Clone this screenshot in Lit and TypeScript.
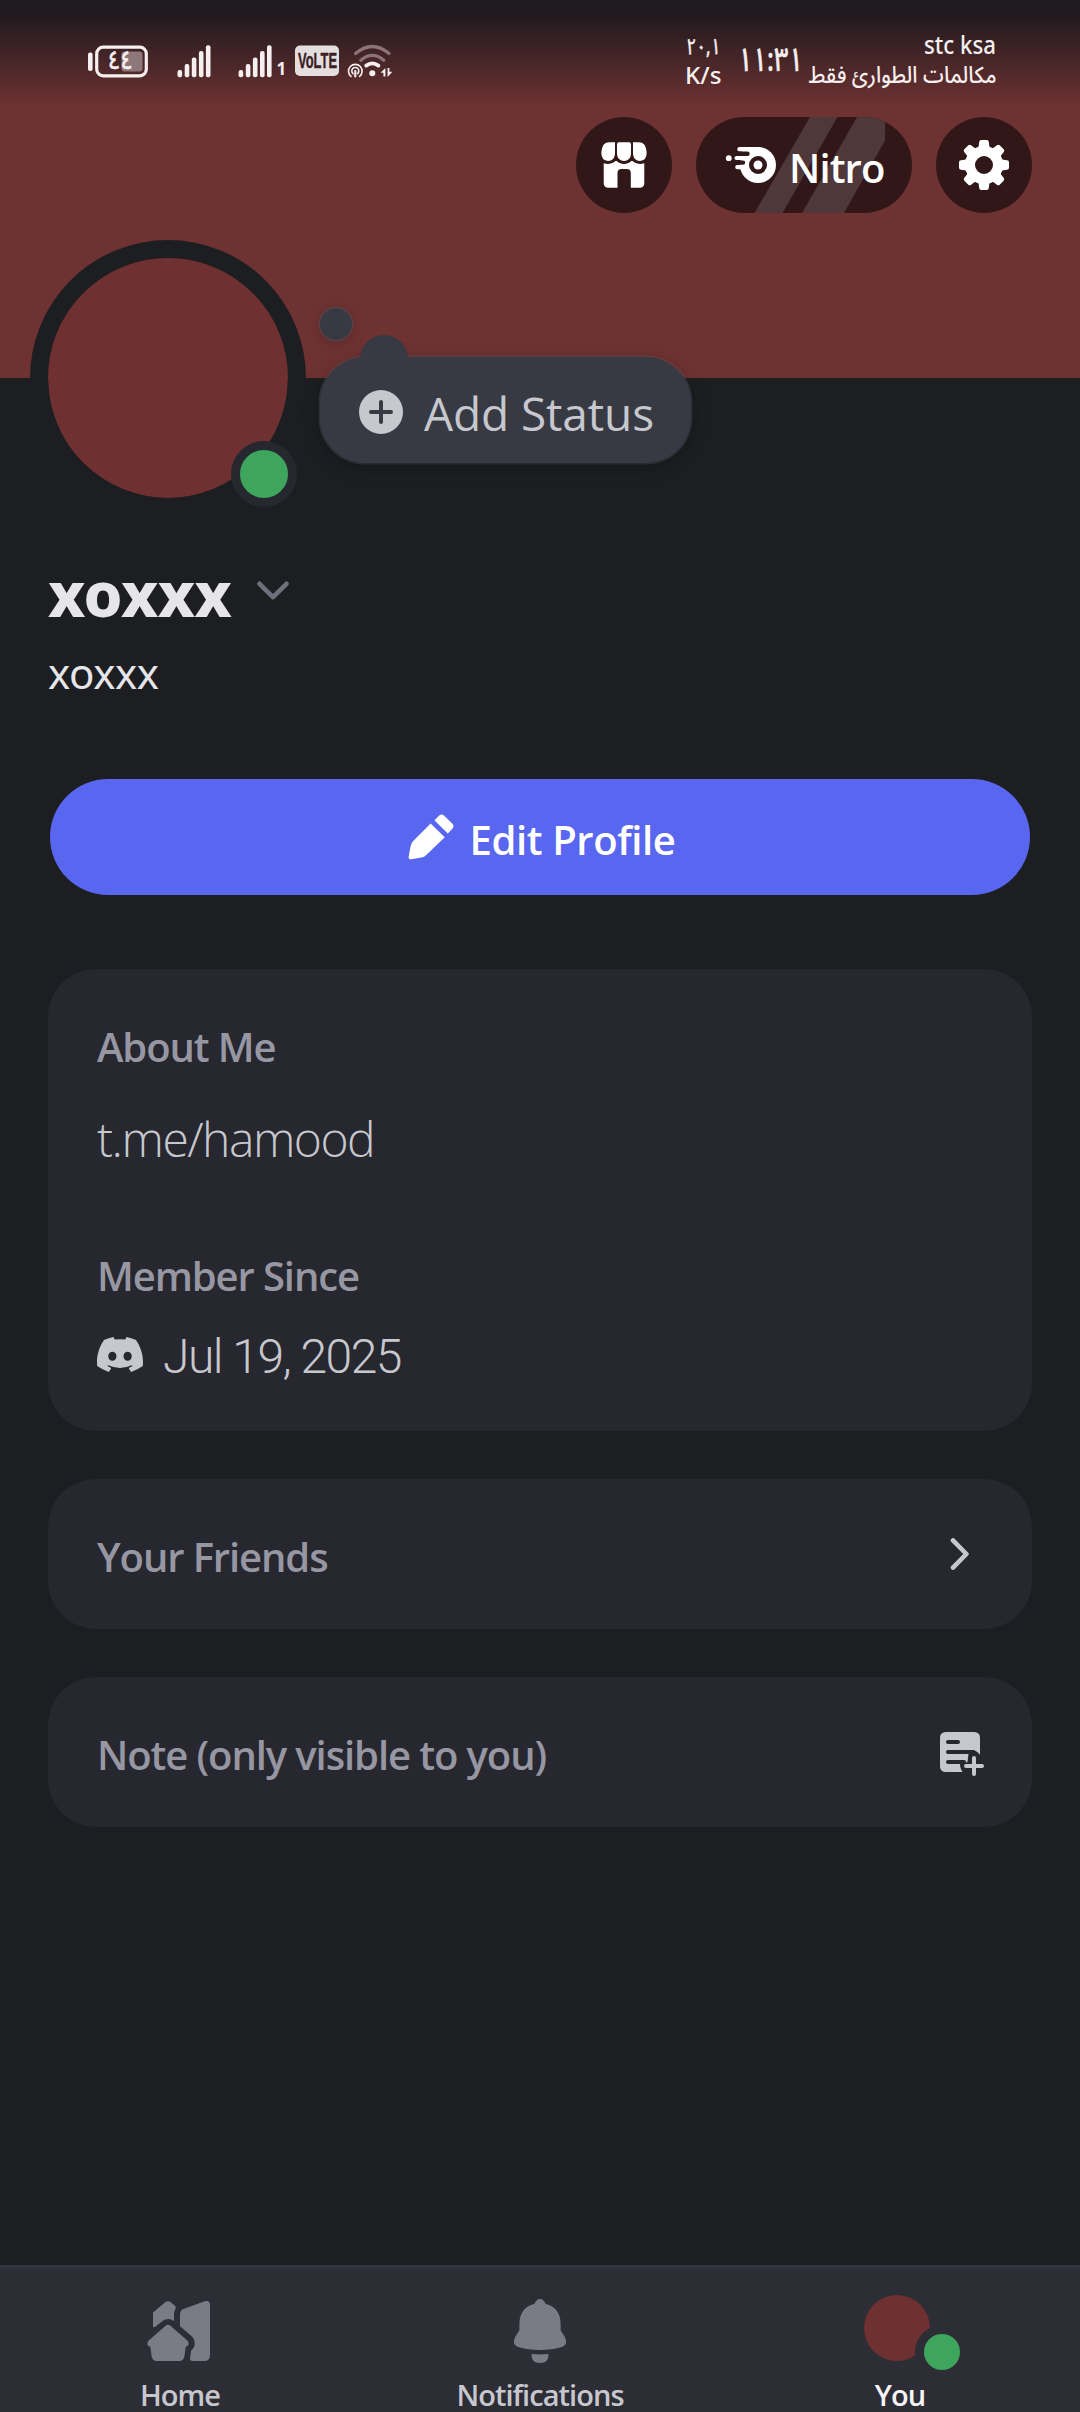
import { LitElement, html, svg, css } from 'lit';
import { customElement, property } from 'lit/decorators.js';

const shopIcon = svg`<svg width="96" height="96" viewBox="0 0 96 96" fill="#fff">
  <path d="M33 25.3H39V37Q38.3 44 32 44Q25.5 43.6 25.3 36Q26 29 28.3 27Q30 25.3 33 25.3Z"/>
  <path d="M43 25.3H53Q55 25.3 55 27.3V37a7 7 0 0 1-14 0V27.3Q41 25.3 43 25.3Z"/>
  <path d="M63 25.3H57V37Q57.7 44 64 44Q70.5 43.6 70.7 36Q70 29 67.7 27Q66 25.3 63 25.3Z"/>
  <path d="M27.7 46.3Q35 48.5 40 43.8Q44 47.2 48 47.2Q52 47.2 56 43.8Q61 48.5 68.3 46.3V66Q68.3 70.7 63.6 70.7H54.8V56Q54.8 52 50.8 52H45.5Q41.5 52 41.5 56V70.7H32.4Q27.7 70.7 27.7 66Z"/>
</svg>`;

const gearIcon = svg`<svg width="96" height="96" viewBox="0 0 96 96" fill="#fff">
  <circle cx="48" cy="48" r="14" fill="none" stroke="#fff" stroke-width="10"/>
  ${[0, 45, 90, 135, 180, 225, 270, 315].map(
    (a) => svg`<path transform="rotate(${a} 48 48)" d="M43.2 25Q43.4 23 45.2 23H50.8Q52.6 23 52.8 25L53.2 28.6L54.5 32H41.5L42.8 28.6Z"/>`
  )}
</svg>`;

const nitroIcon = svg`<svg class="nitro-icon" width="93" height="96" viewBox="0 0 93 96">
  <circle cx="62" cy="48" r="18" fill="#fff"/>
  <path d="M43.5 32.2H62M45 50.2H52" stroke="#fff" stroke-width="4.4" stroke-linecap="round"/>
  <path d="M46 32H62V40H46Z" fill="#fff"/>
  <path d="M40 36.7H51.5M38 45.6H47" stroke="#311718" stroke-width="4.4" stroke-linecap="round"/>
  <path d="M40.5 41H55M41.3 50.2H50" stroke="#fff" stroke-width="4.2" stroke-linecap="round"/>
  <circle cx="32.8" cy="41.2" r="2.9" fill="#fff"/>
  <circle cx="62" cy="48" r="9" fill="#311718"/>
  <circle cx="62" cy="48" r="4.5" fill="#fff"/>
</svg>`;

const nitroStripes = svg`<svg class="stripes" width="216" height="96" viewBox="0 0 216 96" fill="#4f3839">
  <path d="M114 0H141.5L86.5 96H58.5Z"/><path d="M161 0H189V23.5L148 96H106Z"/>
</svg>`;

const plusIcon = svg`<svg width="44" height="44" viewBox="0 0 44 44">
  <circle cx="22" cy="22" r="22" fill="#c7c7ce"/>
  <path d="M12 22H32M22 12V32" stroke="#383a43" stroke-width="4" stroke-linecap="round"/>
</svg>`;

const pencilIcon = svg`<svg width="46" height="46" viewBox="0 0 46 46" fill="#fff">
  <path d="M22.6 9.4L36.8 23.2L18.3 41Q16.3 43 13.4 43.5L3.2 45.3Q.2 45.5 .7 42.5L2.5 32.4Q3 29.3 5.2 27Z"/>
  <path d="M26.4 6.2L31 1.7Q33.6-.7 36.2 1.7L44.2 9.6Q46.8 12.2 44.2 14.9L39.8 19.5Z"/>
</svg>`;

const discordIcon = svg`<svg width="46" height="35" viewBox="0 0 127.14 96.36" fill="#c7c7ce">
  <path d="M107.7,8.07A105.15,105.15,0,0,0,81.47,0a72.06,72.06,0,0,0-3.36,6.83A97.68,97.68,0,0,0,49,6.83,72.37,72.37,0,0,0,45.64,0,105.89,105.89,0,0,0,19.39,8.09C2.79,32.65-1.71,56.6.54,80.21h0A105.73,105.73,0,0,0,32.71,96.36,77.7,77.7,0,0,0,39.6,85.25a68.42,68.42,0,0,1-10.85-5.18c.91-.66,1.8-1.34,2.66-2a75.57,75.57,0,0,0,64.32,0c.87.71,1.76,1.39,2.66,2a68.68,68.68,0,0,1-10.87,5.19,77,77,0,0,0,6.89,11.1A105.25,105.25,0,0,0,126.6,80.22h0C129.24,52.84,122.09,29.11,107.7,8.07ZM42.45,65.69C36.18,65.69,31,60,31,53s5-12.74,11.43-12.74S54,46,53.89,53,48.84,65.69,42.45,65.69Zm42.24,0C78.41,65.69,73.25,60,73.25,53s5-12.74,11.44-12.74S96.23,46,96.12,53,91.08,65.69,84.69,65.69Z"/>
</svg>`;

const chevronDown = svg`<svg class="chev" width="32" height="20" viewBox="0 0 32 20" fill="none">
  <path d="M2.5 2.8L16 16.2L29.5 2.8" stroke="#6e707b" stroke-width="4.6" stroke-linecap="round" stroke-linejoin="round"/>
</svg>`;

const chevronRight = svg`<svg class="right" width="20" height="32" viewBox="0 0 20 32" fill="none">
  <path d="M3 2.4L16.4 16L3 29.6" stroke="#c7c7ce" stroke-width="4.6" stroke-linecap="round" stroke-linejoin="round"/>
</svg>`;

const noteIcon = svg`<svg class="note" width="44" height="44" viewBox="0 0 44 44" fill="none">
  <rect width="40" height="40" rx="5.5" fill="#c7c7ce"/>
  <path d="M33 18Q38 19 41 24.5V42H24.5Q20 38 20 32L27.5 30L28.5 22Z" fill="#27272f"/>
  <path d="M8 10H18M8 20H33M8 30H24" stroke="#27272f" stroke-width="4" stroke-linecap="round"/>
  <path d="M34 26V42M26 34H42" stroke="#c7c7ce" stroke-width="4" stroke-linecap="round"/>
</svg>`;

const homeIcon = svg`<svg width="96" height="72" viewBox="0 0 96 72" fill="#7a7c85">
  <path d="M33.6 30.8Q36 28.6 38.4 30.8L55.8 46Q58.2 50.6 53.7 51.7L52.5 61Q51.5 66 47.5 66H24.5Q20.5 66 19.6 61L18.3 51.7Q13.8 50.6 16.2 46Z"/>
  <path d="M33.2 7.3Q36 5 38.8 7.3L43.2 11Q44.4 12.2 43.5 13.7Q42 16 42 19V26Q36 22.2 30.5 26L23.5 31.6Q21 33 21 31V17.5Z"/>
  <path d="M48 19.5Q48 15.3 51.5 13.9L72.8 6.2Q78 5 78 10V60Q78 66 72 66H60.5Q57.8 66 58 63.5L59.2 55.5Q63 52 62.8 48Q62.5 43.5 60 41.5L48 31.2Z"/>
</svg>`;

const bellIcon = svg`<svg width="96" height="72" viewBox="0 0 96 72" fill="#7a7c85">
  <path d="M48 4Q51.4 4 53.6 8.8Q68.6 13 68.6 29V35.3L72.8 42Q76.5 49.5 70.5 51.8Q60 55 48 55Q36 55 25.5 51.8Q19.5 49.5 23.2 42L27.4 35.3V29Q27.4 13 42.4 8.8Q44.6 4 48 4Z"/>
  <path d="M39.5 59Q48 59.8 56.5 59Q57 68 48 68Q39 68 39.5 59Z"/>
</svg>`;

const youIcon = svg`<svg class="you" width="96" height="72" viewBox="0 0 96 72">
  <circle cx="45" cy="33" r="33" fill="#6f3031"/>
  <circle cx="90" cy="57" r="27" fill="#2d2d36"/>
  <circle cx="90" cy="57" r="18" fill="#3ea55d"/>
</svg>`;

@customElement('status-bar')
class StatusBar extends LitElement {
  static styles = css`
    :host { display: flex; justify-content: space-between; height: 108px; box-sizing: border-box; padding: 28px 80px 0 86px;
      background: linear-gradient(#1b1b20, #241b1f 18px, rgba(111, 50, 50, 0) 108px); }
    svg { display: block; overflow: visible; }
    text { fill: #f6efef; font-family: "Noto Sans", "Noto Sans Arabic", sans-serif; }
    .volte { font-family: "Liberation Sans", sans-serif; font-weight: 700; fill: #382024; stroke: #382024; stroke-width: 0.4px; }
  `;
  private bars(x: number) {
    return [[0, 42], [7.2, 36], [14.3, 29.4], [21.4, 23], [28.4, 17.2]].map(
      ([dx, y]) => svg`<rect x="${x + dx}" y="${y}" width="4.6" height="${49.2 - y}" rx="2" fill="#f6efef"/>`
    );
  }
  render() {
    return html`
      <svg width="310" height="70" viewBox="0 0 310 70">
        <rect x="2" y="24.5" width="4.6" height="18.5" rx="2" fill="#f6efef"/>
        <rect x="10.7" y="19.2" width="49.6" height="28.6" rx="6.5" fill="none" stroke="#f6efef" stroke-width="3.2"/>
        <rect x="35.5" y="23.5" width="21" height="20" rx="3" fill="#8e777a"/>
        <text x="22" y="41" font-size="26" font-weight="500" textLength="25" lengthAdjust="spacingAndGlyphs" stroke="#f6efef" stroke-width="0.4">٤٤</text>
        ${this.bars(91.5)} ${this.bars(152.6)}
        <text x="190.5" y="47" font-size="17" font-weight="700">1</text>
        <rect x="209" y="17.5" width="44" height="30.5" rx="5" fill="#e4dede"/>
        <text class="volte" x="212" y="40" font-size="21.5" textLength="39" lengthAdjust="spacingAndGlyphs">VoLTE</text>
        <g transform="translate(260 16)" fill="none" stroke-linecap="round">
          <path d="M9.6 9.5Q26.3-4.5 43 9.5" stroke="#8d7376" stroke-width="3.2"/>
          <path d="M14.8 16.2Q26.3 6.4 37.8 16.2" stroke="#8d7376" stroke-width="3.2"/>
          <path d="M20.2 21.6Q26.3 17.2 32.4 21.6" stroke="#f6efef" stroke-width="3.8"/>
          <circle cx="26.3" cy="29.3" r="3" fill="#f6efef"/>
          <path d="M5 32.4A6.8 6.8 0 1 1 13.6 32.4M7 29.6A3.5 3.5 0 1 1 11.6 29.6" stroke="#f6efef" stroke-width="1.6"/>
          <path d="M9.3 27V32.5" stroke="#f6efef" stroke-width="2.2"/>
          <path d="M34.5 28.8L39.4 24V32.6H37.4V28.8ZM41.6 24H43.4V27.8H46.4L41.6 33Z" fill="#f6efef"/>
        </g>
      </svg>
      <svg width="314" height="70" viewBox="0 0 314 70">
        <text x="0.5" y="25.8" font-size="22" textLength="34" lengthAdjust="spacingAndGlyphs" stroke="#f6efef" stroke-width="0.6">٢٠,١</text>
        <text x="-1" y="56" font-size="24" font-weight="500" textLength="36.5" lengthAdjust="spacingAndGlyphs">K/s</text>
        <text x="52" y="42.8" font-size="33" font-weight="500" textLength="65" lengthAdjust="spacingAndGlyphs" stroke="#f6efef" stroke-width="0.4">١١:٣١</text>
        <text x="238" y="25.6" font-size="25" font-weight="500" textLength="72" lengthAdjust="spacingAndGlyphs">stc ksa</text>
        <text x="122.5" y="55" font-size="23" font-weight="500" textLength="188" lengthAdjust="spacingAndGlyphs">مكالمات الطوارئ فقط</text>
      </svg>`;
  }
}

@customElement('nav-item')
class NavItem extends LitElement {
  @property() label = '';
  @property({ attribute: false }) icon: unknown;
  @property({ type: Boolean, reflect: true }) active = false;
  static styles = css`
    :host { display: flex; flex-direction: column; align-items: center; width: 360px; padding-top: 28px;
      color: #c7c7ce; font: 600 29px/30px "Open Sans", sans-serif; letter-spacing: -0.95px; }
    :host([active]) { color: #f4f4f6; }
    svg { display: block; overflow: visible; }
    .label { margin-top: 13px; }
  `;
  render() {
    return html`${this.icon}<span class="label">${this.label}</span>`;
  }
}

@customElement('app-root')
class AppRoot extends LitElement {
  static styles = css`
    :host { display: flex; flex-direction: column; width: 1080px; height: 2412px; overflow: hidden; background: #1d1e22;
      font-family: "Open Sans", "Noto Sans", sans-serif; }
    svg { display: block; flex: none; }
    .banner { height: 378px; flex: none; background: #6f3232; }
    .actions { display: flex; justify-content: flex-end; gap: 24px; padding: 9px 48px 0 0; }
    .action { display: flex; width: 96px; height: 96px; border-radius: 48px; background: #311718; overflow: hidden; }
    .nitro { position: relative; width: 216px; color: #fff; }
    .stripes { position: absolute; inset: 0; }
    .nitro-icon { position: relative; }
    .nitro-label { position: relative; padding-top: 26px; font-size: 40px; font-weight: 600; line-height: 50px; letter-spacing: -0.9px; }
    .profile { display: flex; flex: none; height: 276px; margin: -138px 0 0 30px; }
    .avatar { position: relative; width: 240px; height: 240px; border: 18px solid #1d1e22; border-radius: 50%; background: #6f3031; background-clip: padding-box; }
    .online { position: absolute; left: 183px; top: 183px; width: 48px; height: 48px; border: 9px solid #27272f; border-radius: 50%; background: #3ea55d; }
    .status { position: relative; display: flex; box-sizing: border-box; width: 371px; height: 106px; margin: 117px 0 0 14px; padding: 33px 0 0 39px; gap: 21px;
      border-radius: 45px; background: #383a43; box-shadow: 0 0 0 1.5px rgba(90, 92, 104, .3), 0 4px 18px rgba(0, 0, 0, .28); }
    .nub { position: absolute; left: 40px; top: -22px; width: 48px; height: 48px; border-radius: 50%; background: #383a43; }
    .bead { position: absolute; left: 0; top: -49px; width: 32px; height: 32px; border-radius: 50%; background: #383a43;
      box-shadow: 0 0 0 1.5px rgba(90, 92, 104, .4), 0 2px 14px rgba(0, 0, 0, .25); }
    .status svg { position: relative; }
    .status-label { padding-top: 1px; color: #c7c7ce; font-size: 46px; line-height: 44px; letter-spacing: -0.1px; }
    .name { display: flex; flex: none; height: 80px; margin: 37px 0 0 48px; color: #e5e5ea; font: 800 62px/80px "Noto Sans", sans-serif; letter-spacing: -0.5px; }
    .chev { margin: 28px 0 0 26px; }
    .handle { flex: none; margin: 15px 0 -1px 48px; color: #e5e5ea; font: 400 42px/50px "Noto Sans", sans-serif; letter-spacing: -0.4px; }
    .edit { display: flex; flex: none; align-items: center; justify-content: center; gap: 16px; height: 116px; margin: 82px 50px 0 50px; padding-left: 3px; box-sizing: border-box; border-radius: 58px; background: #5866f0;
      color: #fff; font-size: 40px; font-weight: 600; line-height: 50px; letter-spacing: -0.4px; }
    .edit-label { padding-top: 6px; }
    .card { flex: none; box-sizing: border-box; margin: 48px 48px 0; border-radius: 48px; background: #27272f; }
    .about { height: 462px; margin-top: 74px; padding: 53px 48px 0 49px; }
    .head { color: #9797a3; font-size: 40px; font-weight: 600; line-height: 50px; letter-spacing: -1.1px; }
    .body { color: #c7c7ce; font-size: 48px; font-weight: 330; line-height: 60px; letter-spacing: -1.5px; }
    .bio { margin-top: 37px; }
    .since { margin-top: 82px; }
    .date { display: flex; align-items: center; gap: 20px; margin-top: 25px; font-family: Roboto, sans-serif; font-weight: 300; letter-spacing: -1.5px; }
    .date svg { margin-bottom: 5px; }
    .date span { padding-top: 1px; }
    .row { display: flex; align-items: center; justify-content: space-between; height: 150px; padding: 0 48px 0 49px; }
    .row .head { padding-top: 5px; }
    .right { margin-right: 14px; }
    .note { margin-top: 4px; }
    .nav { display: flex; flex: none; box-sizing: border-box; height: 147px; margin-top: auto; border-top: 3px solid #34343e; background: #2d2d36; }
    .nav nav-item { margin-top: -1px; }
  `;
  render() {
    return html`
      <header class="banner">
        <status-bar></status-bar>
        <div class="actions">
          <div class="action">${shopIcon}</div>
          <div class="action nitro">${nitroStripes}${nitroIcon}<span class="nitro-label">Nitro</span></div>
          <div class="action">${gearIcon}</div>
        </div>
      </header>
      <section class="profile">
        <div class="avatar"><div class="online"></div></div>
        <div class="status">
          <span class="bead"></span><span class="nub"></span>
          ${plusIcon}<span class="status-label">Add Status</span>
        </div>
      </section>
      <div class="name">xoxxx${chevronDown}</div>
      <div class="handle">xoxxx</div>
      <div class="edit">${pencilIcon}<span class="edit-label">Edit Profile</span></div>
      <section class="card about">
        <div class="head">About Me</div>
        <div class="body bio">t.me/hamood</div>
        <div class="head since">Member Since</div>
        <div class="body date">${discordIcon}<span>Jul 19, 2025</span></div>
      </section>
      <section class="card row"><span class="head">Your Friends</span>${chevronRight}</section>
      <section class="card row"><span class="head">Note (only visible to you)</span>${noteIcon}</section>
      <nav class="nav">
        <nav-item label="Home" .icon=${homeIcon}></nav-item>
        <nav-item label="Notifications" .icon=${bellIcon}></nav-item>
        <nav-item label="You" active .icon=${youIcon}></nav-item>
      </nav>`;
  }
}
